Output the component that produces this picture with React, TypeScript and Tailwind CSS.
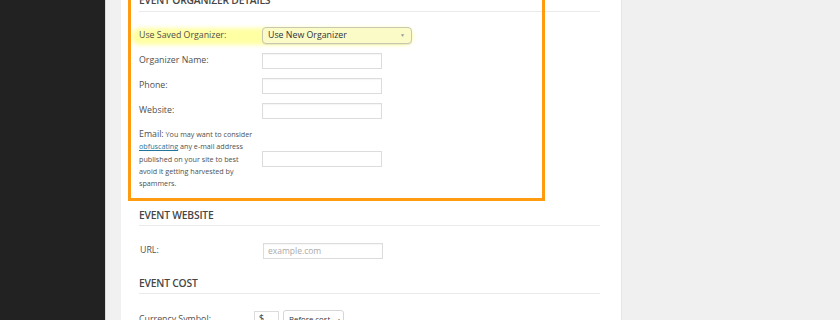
import React from 'react';

const font = { fontFamily: '"Open Sans", "Liberation Sans", sans-serif' };

function Heading({ children, className = '' }: { children: React.ReactNode; className?: string }) {
  return (
    <div className={`h-[21px] flex items-center border-b border-[#eaeaea] ${className}`}>
      <span className="text-[10.3px] font-semibold text-[#464646] tracking-[-0.2px] uppercase">{children}</span>
    </div>
  );
}

function TextRow({ label, placeholder }: { label: string; placeholder?: string }) {
  return (
    <div className="h-[25px] flex items-center">
      <span className="w-[123px] shrink-0 text-[8.8px] text-[#4f4f4f]">{label}</span>
      <div className="w-[120px] h-[16px] border border-[#dcdcdc] bg-white shadow-[inset_0_1px_1px_rgba(0,0,0,0.04)] flex items-center px-[4px]">
        {placeholder && <span className="text-[8.5px] text-[#aaa]">{placeholder}</span>}
      </div>
    </div>
  );
}

export default function App() {
  return (
    <div className="w-[840px] h-[320px] overflow-hidden flex bg-[#f0f0f0]" style={font}>
      {/* admin sidebar */}
      <div className="w-[106px] shrink-0 bg-[#222] border-r border-[#d8d8d8]" />
      <div className="w-[15px] shrink-0 bg-[#f1f1f1]" />

      {/* edit panel */}
      <div className="relative w-[500px] shrink-0 bg-white pl-[18px] pr-[21px]">
        <Heading className="-mt-[9px]">Event Organizer Details</Heading>

        {/* highlighter stroke */}
        <div className="absolute left-[10px] top-[28px] w-[282px] h-[17px] rounded-full bg-[#ffff8c]/80 blur-[2px]" />

        <div className="relative mt-[11px] h-[25px] flex items-center">
          <span className="w-[123px] shrink-0 text-[8.8px] text-[#4f4f4f]">Use Saved Organizer:</span>
          <div className="w-[150px] h-[17px] rounded-[4px] border border-[#c8c8b0] bg-[#fbfbc8] shadow-[0_1px_1px_rgba(0,0,0,0.08)] flex items-center justify-between pl-[5px] pr-[6px]">
            <span className="text-[8.8px] text-[#333]">Use New Organizer</span>
            <span className="text-[5px] text-[#999]">▼</span>
          </div>
        </div>
        <TextRow label="Organizer Name:" />
        <TextRow label="Phone:" />
        <TextRow label="Website:" />

        <div className="mt-[5px] flex items-center">
          <div className="w-[123px] shrink-0 whitespace-nowrap text-[7.2px] leading-[12.3px] text-[#4f4f4f]">
            <span className="text-[8.8px]">Email:</span> You may want to consider
            <br />
            <span className="text-[#21759b] underline">obfuscating</span> any e-mail address
            <br />
            published on your site to best
            <br />
            avoid it getting harvested by
            <br />
            spammers.
          </div>
          <div className="w-[120px] h-[16px] border border-[#dcdcdc] bg-white" />
        </div>

        {/* orange callout box */}
        <div className="absolute left-[7px] top-[-10px] w-[417px] h-[211px] border-[3px] border-[#fe9b10] pointer-events-none" />

        <Heading className="mt-[16px]">Event Website</Heading>
        <div className="mt-[12px] pl-[1px]">
          <TextRow label="URL:" placeholder="example.com" />
        </div>

        <Heading className="mt-[10px]">Event Cost</Heading>
        <div className="mt-[13px] h-[25px] flex items-center">
          <span className="w-[115px] shrink-0 text-[8.8px] text-[#4f4f4f]">Currency Symbol:</span>
          <div className="w-[25px] h-[18px] border border-[#dcdcdc] bg-white text-[8.8px] text-[#333] pl-[4px]">$</div>
          <div className="ml-[4px] w-[61px] h-[19px] rounded-[3px] border border-[#d6d6d6] bg-white flex items-center gap-[6px] pl-[5px] whitespace-nowrap">
            <span className="text-[7.8px] text-[#333]">Before cost</span>
            <span className="text-[5.5px] text-[#333]">▲</span>
          </div>
        </div>
      </div>

      <div className="flex-1 bg-[#f0f0f0] border-l border-[#e6e6e6]" />
    </div>
  );
}
